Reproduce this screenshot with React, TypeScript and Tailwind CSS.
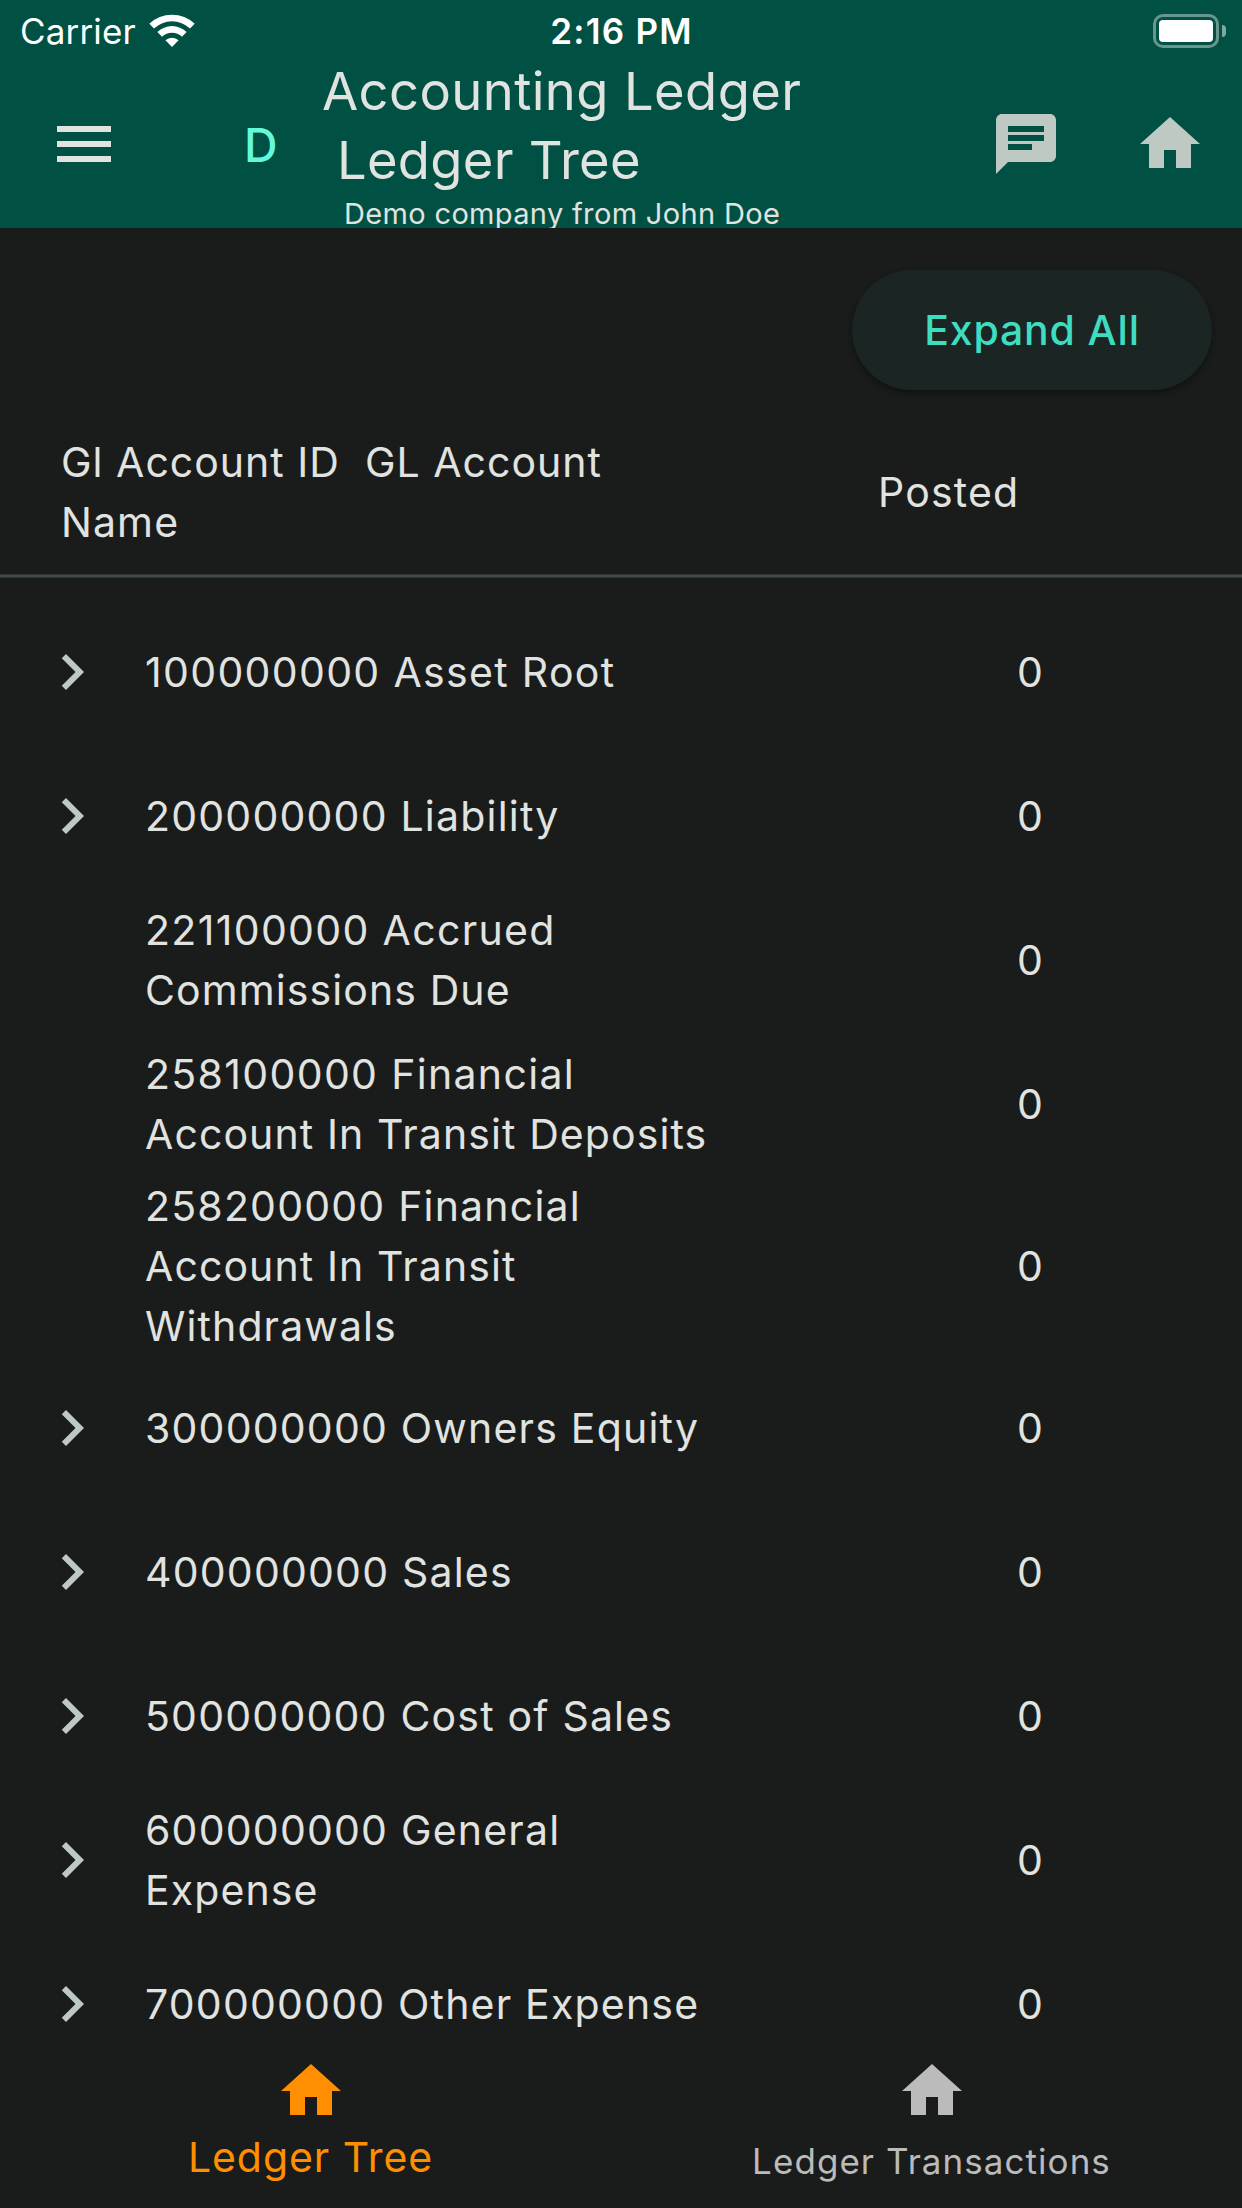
import type { ReactNode } from 'react';

type Account = { lines: string[]; posted: string; expandable?: boolean };

const accounts: Account[] = [
  { lines: ['100000000 Asset Root'], posted: '0', expandable: true },
  { lines: ['200000000 Liability'], posted: '0', expandable: true },
  { lines: ['221100000 Accrued', 'Commissions Due'], posted: '0' },
  { lines: ['258100000 Financial', 'Account In Transit Deposits'], posted: '0' },
  { lines: ['258200000 Financial', 'Account In Transit', 'Withdrawals'], posted: '0' },
  { lines: ['300000000 Owners Equity'], posted: '0', expandable: true },
  { lines: ['400000000 Sales'], posted: '0', expandable: true },
  { lines: ['500000000 Cost of Sales'], posted: '0', expandable: true },
  { lines: ['600000000 General', 'Expense'], posted: '0', expandable: true },
  { lines: ['700000000 Other Expense'], posted: '0', expandable: true },
];

function tracking(line: string) {
  if (/^\d*1/.test(line)) return 'tracking-[1.33px]';
  return /^\d/.test(line) ? 'tracking-[1.2px]' : 'tracking-[1.1px]';
}

function Icon({ d, className = '' }: { d: string; className?: string }) {
  return (
    <svg viewBox="0 0 24 24" fill="currentColor" className={`size-[72px] shrink-0 ${className}`}>
      <path d={d} />
    </svg>
  );
}

const MENU = 'M3 18h18v-2H3v2zm0-5h18v-2H3v2zm0-7v2h18V6H3z';
const CHAT =
  'M20 2H4c-1.1 0-1.99.9-1.99 2L2 22l4-4h14c1.1 0 2-.9 2-2V4c0-1.1-.9-2-2-2zM6 9h12v2H6V9zm8 5H6v-2h8v2zm4-6H6V6h12v2z';
const HOME = 'M10 20v-6h4v6h5v-8h3L12 3 2 12h3v8z';
const CHEVRON = 'M10 6L8.59 7.41 13.17 12l-4.58 4.59L10 18l6-6z';

function StatusBar() {
  return (
    <div className="grid h-[60px] grid-cols-3 items-center pr-4 pl-5 text-[35px] leading-[62px] text-white">
      <div className="flex items-center">
        <span className="tracking-[0.16px]">Carrier</span>
        <svg viewBox="0 0 46 34" className="ml-[13px] h-[34px] w-[46px]" fill="white">
          <path d="M0.3 9.7 A33 33 0 0 1 45.7 9.7 L41 14.4 A26.5 26.5 0 0 0 5 14.4 Z" />
          <path d="M8.4 18 A21 21 0 0 1 37.6 18 L33 22.8 A14.6 14.6 0 0 0 13 22.8 Z" />
          <path d="M16.4 26.3 A9.6 9.6 0 0 1 29.6 26.3 L23 33 Z" />
        </svg>
      </div>
      <span className="-ml-[3px] text-center font-semibold tracking-[1.24px]">2:16 PM</span>
      <div className="flex items-center justify-end gap-[3px]">
        <div className="h-[34px] w-[66px] rounded-[10px] border-3 border-white/40 p-[3px]">
          <div className="h-full rounded-[4px] bg-white" />
        </div>
        <div className="h-3 w-1 rounded-r-full bg-white/50" />
      </div>
    </div>
  );
}

function AppBar() {
  return (
    <div className="flex h-[168px] items-center pr-9 pl-12 text-[#e1e3e0]">
      <Icon d={MENU} />
      <span className="mt-[2px] ml-[124px] w-[78px] text-[46.5px] leading-[72px] font-medium text-[#62fadb]">
        D
      </span>
      <div className="-mt-[3px] grow self-start whitespace-pre">
        <h1 className="text-[52.5px] leading-[69px] tracking-[0.4px]">Accounting Ledger</h1>
        <h1 className="ml-[15px] text-[52.5px] leading-[69px] tracking-[0.28px]">Ledger Tree</h1>
        <p className="-mt-px ml-[22px] text-[29px] leading-[39px] tracking-[0.34px]">
          Demo company from John Doe
        </p>
      </div>
      <div className="flex gap-[72px] text-[#bfc9c4]">
        <Icon d={CHAT} />
        <Icon d={HOME} />
      </div>
    </div>
  );
}

function AccountRow({ account }: { account: Account }) {
  return (
    <div
      className={`flex shrink-0 items-center pl-9 ${account.lines.length > 2 ? 'h-[180px]' : 'h-[144px]'}`}
    >
      <div className="w-[109px] text-[#bfc9c4]">{account.expandable && <Icon d={CHEVRON} />}</div>
      <div className="w-[872px]">
        {account.lines.map((line) => (
          <p key={line} className={tracking(line)}>
            {line}
          </p>
        ))}
      </div>
      <span>{account.posted}</span>
    </div>
  );
}

function NavItem({ children, className }: { children: ReactNode; className: string }) {
  return (
    <div className={`flex w-1/2 flex-col items-center pt-[15px] ${className}`}>
      <Icon d={HOME} />
      {children}
    </div>
  );
}

export default function App() {
  return (
    <div className="flex h-[2208px] w-[1242px] flex-col overflow-hidden bg-[#191c1b] font-['Inter',sans-serif] text-[41px] leading-[60px] text-[#e1e3e0]">
      <header className="h-[228px] shrink-0 overflow-hidden bg-[#005143]">
        <StatusBar />
        <AppBar />
      </header>

      <main className="flex min-h-0 grow flex-col overflow-hidden">
        <div className="flex h-[180px] shrink-0 justify-end pt-[42px] pr-[30px]">
          <button className="h-[120px] w-[360px] rounded-full bg-[#1b2523] pb-px font-medium tracking-[0.84px] text-[#3fddc0] shadow-[0_3px_6px_rgba(0,0,0,0.35)]">
            Expand All
          </button>
        </div>

        <div className="flex h-[166px] shrink-0 items-center pt-[2px] pl-[61px]">
          <div className="w-[817px] whitespace-pre">
            <p className="tracking-[1.01px]">{'Gl Account ID  GL Account'}</p>
            <p className="tracking-[1.1px]">Name</p>
          </div>
          <span className="tracking-[1.18px]">Posted</span>
        </div>
        <div className="h-1 shrink-0 border-y border-[#2f3634] bg-[#3f4946]" />

        <div className="flex flex-col pt-[22px]">
          {accounts.map((account) => (
            <AccountRow key={account.lines[0]} account={account} />
          ))}
        </div>
      </main>

      <nav className="flex h-[168px] shrink-0 bg-[#191c1b]">
        <NavItem className="text-[#ff8f00]">
          <span className="tracking-[0.93px]">Ledger Tree</span>
        </NavItem>
        <NavItem className="text-[#babbba]">
          <span className="text-[35px] leading-[69px] tracking-[1.05px]">Ledger Transactions</span>
        </NavItem>
      </nav>
    </div>
  );
}
